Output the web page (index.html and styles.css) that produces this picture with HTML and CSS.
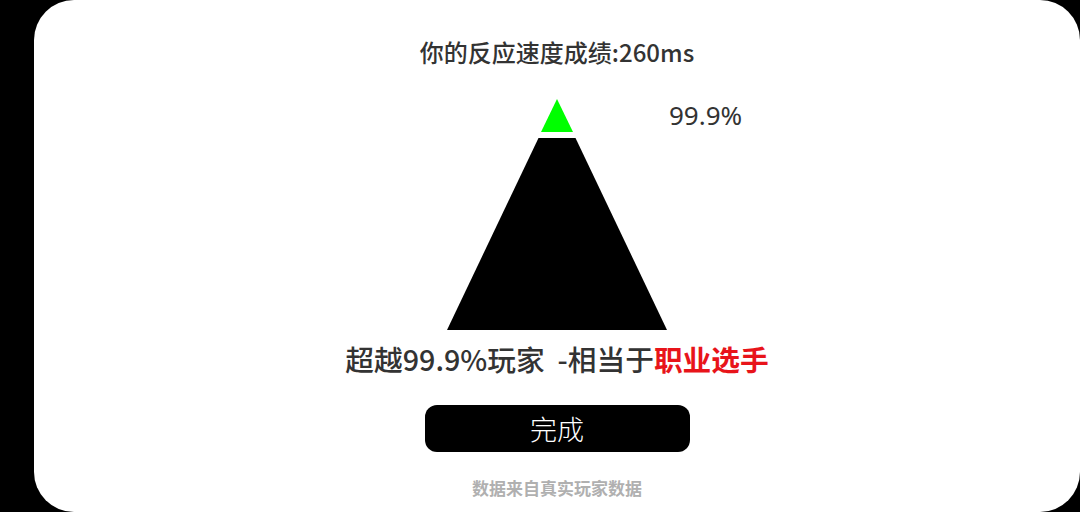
FILE: index.html
```html
<!DOCTYPE html>
<html lang="zh">
<head>
<meta charset="utf-8">
<link rel="stylesheet" href="styles.css">
</head>
<body>
<div class="card">
  <div class="title">你的反应速度成绩:260ms</div>
  <div class="pyramid">
    <svg class="pyramid-svg" width="220" height="232" viewBox="0 0 220 232">
      <polygon points="110,0 126,33 94,33" fill="#00ff00"/>
      <polygon points="91.5,39 128.5,39 220,231 0,231" fill="#000"/>
    </svg>
    <span class="pct">99.9%</span>
  </div>
  <div class="result">超越99.9%玩家&nbsp; -相当于<span class="rank">职业选手</span></div>
  <button class="done">完成</button>
  <div class="source">数据来自真实玩家数据</div>
</div>
</body>
</html>
```
FILE: styles.css
```css
html, body {
  margin: 0;
  padding: 0;
  background: #000;
  width: 1080px;
  height: 512px;
  overflow: hidden;
}
.card {
  margin-left: 34px;
  width: 1046px;
  height: 512px;
  background: #fff;
  border-radius: 40px;
  display: flex;
  flex-direction: column;
  align-items: center;
  box-sizing: border-box;
  padding-top: 36px;
  font-family: "Noto Sans CJK SC", "Noto Sans", sans-serif;
}
.title {
  font-size: 24px;
  line-height: 32px;
  font-weight: 500;
  color: #333;
}
.pyramid {
  position: relative;
  margin-top: 31px;
  width: 220px;
  height: 232px;
}
.pyramid-svg {
  display: block;
}
.pct {
  position: absolute;
  left: 222px;
  top: 0px;
  font-family: "Noto Sans", sans-serif;
  font-size: 26px;
  line-height: 32px;
  color: #333;
  white-space: nowrap;
}
.result {
  margin-top: 8px;
  font-size: 28.7px;
  line-height: 40px;
  font-weight: 500;
  color: #333;
  white-space: nowrap;
}
.rank {
  color: #e8141a;
  font-weight: 700;
}
.done {
  margin-top: 26px;
  width: 265px;
  height: 47px;
  border: none;
  border-radius: 12px;
  background: #000;
  color: #fff;
  font-family: "Noto Sans CJK SC", "Noto Sans", sans-serif;
  font-size: 27px;
  font-weight: 300;
  padding: 0;
  line-height: 47px;
}
.source {
  margin-top: 24px;
  font-size: 17px;
  line-height: 24px;
  font-weight: 700;
  color: #b0b0b0;
}
```
